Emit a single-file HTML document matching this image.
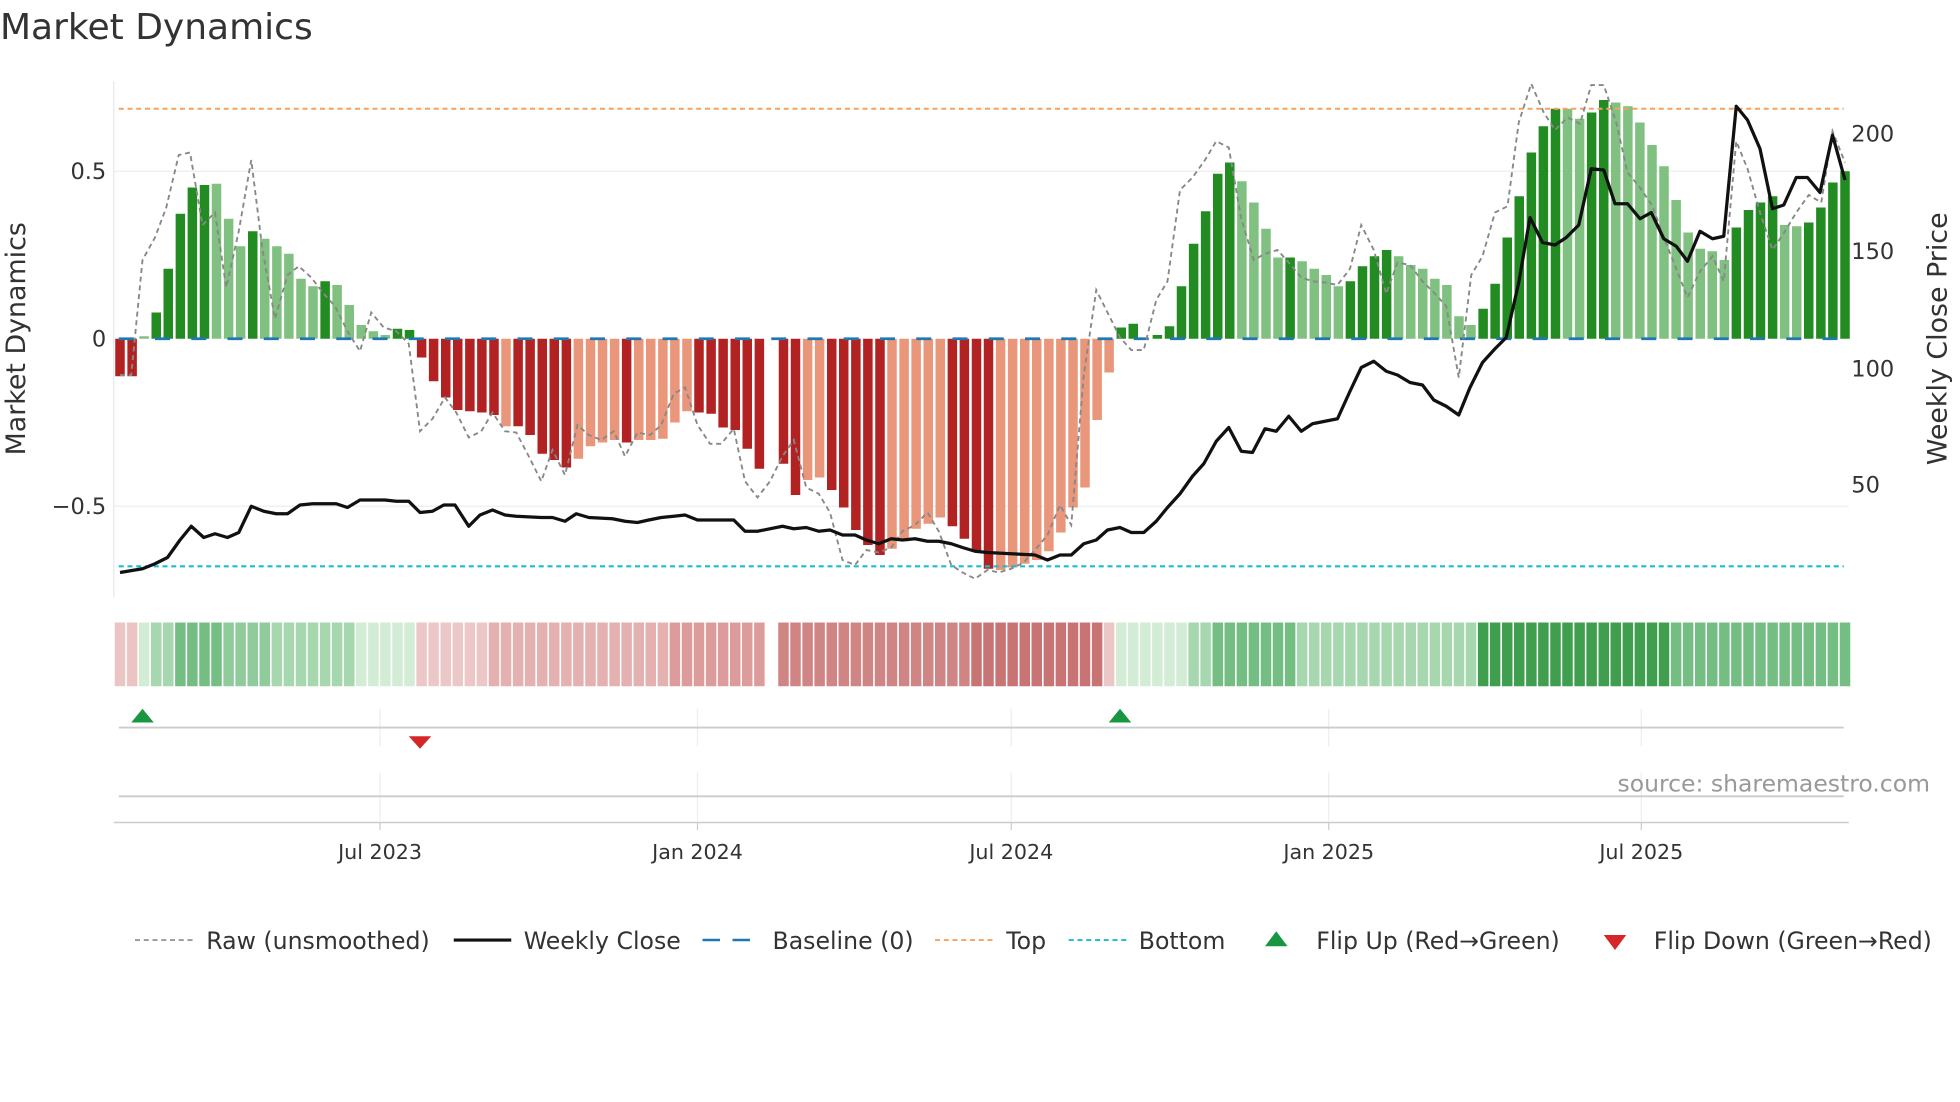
<!DOCTYPE html>
<html><head><meta charset="utf-8"><style>
html,body{margin:0;padding:0;background:#fff;}
svg{display:block;font-family:"DejaVu Sans","Liberation Sans",sans-serif;}
</style></head><body>
<svg xmlns="http://www.w3.org/2000/svg" width="1960" height="1102" viewBox="0 0 1568 881.6">
<rect width="1568" height="881.6" fill="#fff"/>
<text x="0" y="31" font-size="28.8" fill="#333">Market Dynamics</text>
<line x1="91" y1="137" x2="1479" y2="137" stroke="#eceef2" stroke-width="1"/>
<line x1="91" y1="405" x2="1479" y2="405" stroke="#eceef2" stroke-width="1"/>
<line x1="91" y1="65" x2="91" y2="478" stroke="#e6e8ec" stroke-width="1"/>
<g font-size="18" fill="#333">
<text x="85" y="143" text-anchor="end">0.5</text>
<text x="85" y="277" text-anchor="end">0</text>
<text x="85" y="411" text-anchor="end">−0.5</text>
<text x="1481" y="113">200</text>
<text x="1481" y="207">150</text>
<text x="1481" y="301">100</text>
<text x="1481" y="394">50</text>
</g>
<text transform="translate(20,271) rotate(-90)" text-anchor="middle" font-size="21.5" fill="#333">Market Dynamics</text>
<text transform="translate(1557,271) rotate(-90)" text-anchor="middle" font-size="21.5" fill="#333">Weekly Close Price</text>
<g fill="none" stroke-width="7.6">
<path stroke="#b22222" d="M96 271V301M105.7 271V301M337.3 271V286M346.9 271V305M356.6 271V318M366.2 271V328M375.9 271V329M385.5 271V330M395.2 271V332M414.5 271V341M424.1 271V348M433.8 271V363M443.4 271V368M453.1 271V374M501.3 271V354M559.2 271V330M568.9 271V331M578.5 271V342M588.2 271V344M597.8 271V359M607.5 271V375M626.8 271V371M636.4 271V396M665.4 271V392M675 271V406M684.7 271V424M694.3 271V436M704 271V444M761.9 271V421M771.5 271V431M781.2 271V441M790.8 271V455"/>
<path stroke="#e9967a" d="M404.8 271V341M462.7 271V367M472.4 271V357M482 271V354M491.7 271V352M511 271V352M520.6 271V352M530.3 271V351M539.9 271V338M549.6 271V329M646.1 271V384M655.7 271V382M713.6 271V439M723.3 271V433M732.9 271V423M742.6 271V419M752.2 271V414M800.5 271V456M810.1 271V454M819.8 271V451M829.4 271V448M839.1 271V441M848.7 271V426M858.4 271V406M868 271V390M877.7 271V336M887.3 271V298"/>
<path stroke="#228b22" d="M125 271V250M134.6 271V215M144.3 271V171M153.9 271V150M163.6 271V148M202.2 271V185M260.1 271V225M318 271V263M327.6 271V264M897 271V262M906.6 271V259M925.9 271V268M935.6 271V261M945.2 271V229M954.9 271V195M964.5 271V169M974.2 271V139M983.8 271V130M1032.1 271V206M1080.3 271V225M1090 271V213M1099.6 271V205M1109.3 271V200M1186.5 271V247M1196.1 271V227M1205.8 271V190M1215.4 271V157M1225.1 271V122M1234.7 271V101M1244.4 271V87M1273.3 271V90M1283 271V80M1389.1 271V182M1398.8 271V168M1408.4 271V162M1418.1 271V157M1447 271V178M1456.7 271V166M1466.3 271V146M1476 271V137"/>
<path stroke="#80c080" d="M115.3 271V269M173.2 271V147M182.9 271V175M192.5 271V197M211.8 271V191M221.5 271V197M231.1 271V203M240.8 271V223M250.4 271V229M269.7 271V228M279.4 271V244M289 271V260M298.7 271V265M308.3 271V268M993.5 271V145M1003.1 271V162M1012.8 271V183M1022.4 271V206M1041.7 271V209M1051.4 271V215M1061 271V220M1070.7 271V229M1118.9 271V205M1128.6 271V212M1138.2 271V215M1147.9 271V223M1157.5 271V228M1167.2 271V253M1176.8 271V260M1254 271V87M1263.7 271V95M1292.6 271V82M1302.3 271V85M1311.9 271V98M1321.6 271V116M1331.2 271V133M1340.9 271V160M1350.5 271V186M1360.2 271V199M1369.8 271V201M1379.5 271V208M1427.7 271V180M1437.4 271V181"/>
</g>
<g fill="none" stroke-width="8.4">
<path stroke="#ebc4c4" d="M96 498V549M105.7 498V549"/>
<path stroke="#d3ecd6" d="M115.3 498V549M289 498V549M298.7 498V549M308.3 498V549M318 498V549M327.6 498V549M897 498V549M906.6 498V549M916.3 498V549M925.9 498V549M935.6 498V549M945.2 498V549"/>
<path stroke="#a6d7af" d="M125 498V549M134.6 498V549M221.5 498V549M231.1 498V549M240.8 498V549M250.4 498V549M260.1 498V549M269.7 498V549M279.4 498V549M954.9 498V549M964.5 498V549M1041.7 498V549M1051.4 498V549M1061 498V549M1070.7 498V549M1080.3 498V549M1090 498V549M1099.6 498V549M1109.3 498V549M1118.9 498V549M1128.6 498V549M1138.2 498V549M1147.9 498V549M1157.5 498V549M1167.2 498V549M1176.8 498V549"/>
<path stroke="#8fcb9b" d="M182.9 498V549M192.5 498V549M202.2 498V549M211.8 498V549"/>
<path stroke="#74be84" d="M144.3 498V549M153.9 498V549M163.6 498V549M173.2 498V549M974.2 498V549M983.8 498V549M993.5 498V549M1003.1 498V549M1012.8 498V549M1022.4 498V549M1032.1 498V549M1340.9 498V549M1350.5 498V549M1360.2 498V549M1369.8 498V549M1379.5 498V549M1389.1 498V549M1398.8 498V549M1408.4 498V549M1418.1 498V549M1427.7 498V549M1437.4 498V549M1447 498V549M1456.7 498V549M1466.3 498V549M1476 498V549"/>
<path stroke="#3f9f4f" d="M1186.5 498V549M1196.1 498V549M1205.8 498V549M1215.4 498V549M1225.1 498V549M1234.7 498V549M1244.4 498V549M1254 498V549M1263.7 498V549M1273.3 498V549M1283 498V549M1292.6 498V549M1302.3 498V549M1311.9 498V549M1321.6 498V549M1331.2 498V549"/>
<path stroke="#ecc7c7" d="M337.3 498V549M346.9 498V549M356.6 498V549M366.2 498V549M375.9 498V549M385.5 498V549M887.3 498V549"/>
<path stroke="#e4b0b0" d="M395.2 498V549M404.8 498V549M414.5 498V549M424.1 498V549M433.8 498V549M443.4 498V549M453.1 498V549M462.7 498V549M472.4 498V549M482 498V549M491.7 498V549M501.3 498V549M511 498V549M520.6 498V549M530.3 498V549"/>
<path stroke="#dc9c9c" d="M539.9 498V549M549.6 498V549M559.2 498V549M568.9 498V549M578.5 498V549M588.2 498V549M597.8 498V549M607.5 498V549"/>
<path stroke="#d08585" d="M626.8 498V549M636.4 498V549M646.1 498V549M655.7 498V549M665.4 498V549M675 498V549M684.7 498V549M694.3 498V549M704 498V549M713.6 498V549M723.3 498V549M732.9 498V549M742.6 498V549M752.2 498V549M761.9 498V549M771.5 498V549"/>
<path stroke="#c87474" d="M781.2 498V549M790.8 498V549M800.5 498V549M810.1 498V549M819.8 498V549M829.4 498V549M839.1 498V549M848.7 498V549M858.4 498V549M868 498V549M877.7 498V549"/>
</g>
<line x1="95" y1="87" x2="1475" y2="87" stroke="#f4a261" stroke-width="1.6" stroke-dasharray="4,3"/>
<line x1="95" y1="453" x2="1475" y2="453" stroke="#17becf" stroke-width="1.7" stroke-dasharray="4,3"/>
<line x1="95" y1="271" x2="1475" y2="271" stroke="#1f77b4" stroke-width="2.2" stroke-dasharray="12,17"/>
<polyline fill="none" stroke="#888" stroke-width="1.5" stroke-dasharray="4,3" points="96,300 105,300 114,208 124,190 133,166 143,124 152,122 162,180 172,170 181,230 191,185 201,128 210,200 220,255 230,220 239,213 249,222 259,235 268,245 278,265 288,281 297,250 307,262 317,265 327,275 336,345 346,335 356,318 365,330 375,350 385,345 394,330 404,345 413,346 423,365 433,385 442,360 452,380 462,340 471,348 481,352 491,345 500,365 510,346 520,348 529,340 539,315 548,310 558,340 568,355 577,355 587,343 596,385 606,398 616,385 626,365 635,352 645,390 655,395 664,410 674,448 684,452 693,440 703,442 713,438 722,425 732,420 742,410 751,425 761,452 770,458 780,463 790,456 799,458 809,455 819,450 828,440 838,428 848,404 857,420 867,300 877,232 886,250 896,270 905,280 915,280 925,240 934,225 944,152 954,142 964,128 973,113 983,118 993,175 1003,208 1012,203 1022,200 1031,210 1041,222 1050,225 1060,226 1070,228 1080,215 1089,180 1099,200 1109,235 1118,210 1128,212 1138,225 1148,235 1157,245 1167,302 1177,220 1186,205 1196,170 1206,165 1215,98 1225,67 1235,90 1244,104 1254,94 1264,99 1273,68 1283,68 1293,98 1302,138 1312,150 1322,165 1331,190 1341,215 1350,238 1360,217 1370,205 1379,225 1389,113 1398,135 1408,170 1418,200 1428,185 1437,170 1447,156 1457,162 1466,105 1476,130"/>
<polyline fill="none" stroke="#111" stroke-width="2.6" stroke-linejoin="round" points="96,458 114,455 124,451 134,446 144,432 153,421 163,430 172,427 182,430 191,426 201,405 211,409 221,411 230,411 240,404 250,403 259,403 269,403 278,406 288,400 298,400 308,400 317,401 327,401 336,410 346,409 355,404 364,404 375,421 384,412 394,408 404,412 413,413 433,414 442,414 452,417 461,411 471,414 490,415 500,417 510,418 519,416 529,414 539,413 548,412 558,416 587,416 596,425 606,425 626,421 635,423 645,422 655,425 664,424 674,428 684,428 693,432 703,435 713,431 722,432 732,431 742,433 751,433 761,435 770,438 780,441 790,442 809,443 828,444 838,448 848,444 857,444 867,435 877,432 886,424 896,422 905,426 915,426 925,417 934,406 944,395 954,381 963,371 973,353 983,342 993,361 1002,362 1012,343 1021,345 1031,333 1041,345 1050,339 1060,337 1070,335 1080,313 1089,294 1099,289 1109,297 1118,300 1128,306 1138,308 1147,320 1157,325 1167,332 1176,310 1186,290 1196,279 1205,270 1215,226 1224,174 1234,194 1244,196 1253,190 1263,180 1273,135 1283,136 1292,163 1302,163 1312,175 1321,170 1331,191 1341,197 1350,209 1360,185 1370,191 1379,189 1389,85 1398,96 1408,119 1418,167 1427,164 1437,142 1446,142 1456,154 1466,108 1476,144"/>
<g stroke="#eee" stroke-width="1">
<line x1="304" y1="567" x2="304" y2="597"/><line x1="558" y1="567" x2="558" y2="597"/><line x1="809" y1="567" x2="809" y2="597"/><line x1="1063" y1="567" x2="1063" y2="597"/><line x1="1313" y1="567" x2="1313" y2="597"/>
<line x1="304" y1="618" x2="304" y2="657"/><line x1="558" y1="618" x2="558" y2="657"/><line x1="809" y1="618" x2="809" y2="657"/><line x1="1063" y1="618" x2="1063" y2="657"/><line x1="1313" y1="618" x2="1313" y2="657"/>
</g>
<line x1="95" y1="582" x2="1475" y2="582" stroke="#ccc" stroke-width="1.5"/>
<line x1="95" y1="637" x2="1475" y2="637" stroke="#ccc" stroke-width="1.5"/>
<polygon points="105,578 123,578 114,567" fill="#1a9641"/>
<polygon points="887,578 905,578 896,567" fill="#1a9641"/>
<polygon points="327,589 345,589 336,599" fill="#d62728"/>
<text x="1544" y="633" text-anchor="end" font-size="18.8" fill="#999">source: sharemaestro.com</text>
<line x1="91" y1="658" x2="1479" y2="658" stroke="#ccc" stroke-width="1.2"/>
<g stroke="#ccc"><line x1="304" y1="658" x2="304" y2="664"/><line x1="558" y1="658" x2="558" y2="664"/><line x1="809" y1="658" x2="809" y2="664"/><line x1="1063" y1="658" x2="1063" y2="664"/><line x1="1313" y1="658" x2="1313" y2="664"/></g>
<g font-size="16.5" fill="#333" text-anchor="middle">
<text x="304" y="687">Jul 2023</text><text x="558" y="687">Jan 2024</text><text x="809" y="687">Jul 2024</text><text x="1063" y="687">Jan 2025</text><text x="1313" y="687">Jul 2025</text>
</g>
<g font-size="18.9" fill="#333">
<line x1="108" y1="752" x2="154" y2="752" stroke="#888" stroke-width="1.3" stroke-dasharray="4,3"/>
<text x="165" y="759">Raw (unsmoothed)</text>
<line x1="363" y1="752" x2="409" y2="752" stroke="#111" stroke-width="2.5"/>
<text x="419" y="759">Weekly Close</text>
<line x1="562" y1="752" x2="608" y2="752" stroke="#1f77b4" stroke-width="2" stroke-dasharray="14,10"/>
<text x="618" y="759">Baseline (0)</text>
<line x1="748" y1="752" x2="794" y2="752" stroke="#f4a261" stroke-width="1.5" stroke-dasharray="4,3"/>
<text x="805" y="759">Top</text>
<line x1="855" y1="752" x2="901" y2="752" stroke="#17becf" stroke-width="1.5" stroke-dasharray="4,3"/>
<text x="911" y="759">Bottom</text>
<polygon points="1012,757 1030,757 1021,745" fill="#1a9641"/>
<text x="1053" y="759">Flip Up (Red→Green)</text>
<polygon points="1283,748 1301,748 1292,760" fill="#d62728"/>
<text x="1323" y="759">Flip Down (Green→Red)</text>
</g>
</svg>
</body></html>
